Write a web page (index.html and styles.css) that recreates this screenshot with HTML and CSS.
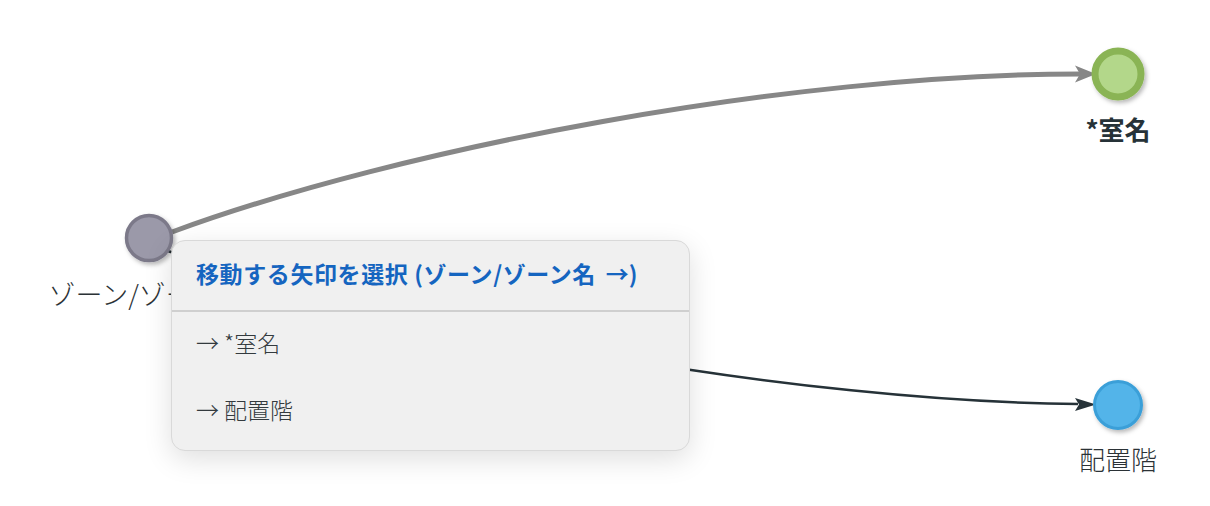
FILE: index.html
```html
<!DOCTYPE html>
<html lang="ja">
<head>
  <meta charset="UTF-8" />
  <meta name="viewport" content="width=device-width, initial-scale=1.0"/>
  <title>ゾーン</title>
  <link rel="stylesheet" href="styles.css">
</head>
<body>
  <div class="grafo">
    <svg class="lienzo" width="1210" height="506" viewBox="0 0 1210 506">
      <defs>
        <filter id="sombra" x="-50%" y="-50%" width="200%" height="200%">
          <feDropShadow dx="2" dy="2.5" stdDeviation="2" flood-color="#000" flood-opacity="0.28"/>
        </filter>
      </defs>

      <!-- aristas -->
      <path class="arista arista-activa" d="M172 232 C 400 148, 790 74, 1080 74"/>
      <polygon class="punta-activa" points="1096,74 1075,65.5 1080,74 1075,82.5"/>

      <path class="arista arista-normal" d="M165 250 C 400 330, 800 402, 1078 404"/>
      <polygon class="punta-normal" points="1096,404.5 1075,398 1079,404.5 1075,411"/>

      <!-- nodos -->
      <circle class="nodo nodo-origen" cx="149" cy="238" r="22.5" filter="url(#sombra)"/>
      <circle class="nodo nodo-elegido" cx="1118" cy="74" r="23" filter="url(#sombra)"/>
      <circle class="nodo nodo-destino" cx="1118" cy="405" r="23.5" filter="url(#sombra)"/>
    </svg>

    <div class="etiqueta etiqueta-origen">ゾーン/ゾーン名</div>
    <div class="etiqueta etiqueta-elegido">*室名</div>
    <div class="etiqueta etiqueta-destino">配置階</div>

    <div class="menu">
      <div class="menu-titulo">移動する矢印を選択 (ゾーン/ゾーン名 <span class="flecha">→</span>)</div>
      <div class="menu-item">→ *室名</div>
      <div class="menu-item">→ 配置階</div>
    </div>
  </div>
</body>
</html>
```

FILE: styles.css
```css
body {
  margin: 0;
  background-color: #ffffff;
  font-family: 'Noto Sans CJK JP', 'Noto Sans', sans-serif;
  color: #263238;
}

.grafo {
  position: relative;
  width: 1210px;
  height: 506px;
  overflow: hidden;
}

.lienzo {
  display: block;
}

.arista {
  fill: none;
}

.arista-activa {
  stroke: #878787;
  stroke-width: 5;
}

.punta-activa {
  fill: #878787;
}

.arista-normal {
  stroke: #263238;
  stroke-width: 2.5;
}

.punta-normal {
  fill: #263238;
}

.nodo-origen {
  fill: #9b99a9;
  stroke: #7b7989;
  stroke-width: 3.5;
}

.nodo-elegido {
  fill: #b3d78a;
  stroke: #8ab454;
  stroke-width: 7;
}

.nodo-destino {
  fill: #52b4e9;
  stroke: #3a9fd8;
  stroke-width: 3;
}

.etiqueta {
  position: absolute;
  width: 300px;
  margin-left: -150px;
  text-align: center;
  font-size: 26px;
  line-height: 32px;
  font-weight: 300;
  color: #2b3236;
  white-space: nowrap;
}

.etiqueta-origen {
  left: 147px;
  top: 278px;
  font-size: 27px;
}

.etiqueta-elegido {
  left: 1118px;
  top: 113px;
  font-weight: 700;
  color: #263238;
}

.etiqueta-destino {
  left: 1118px;
  top: 443px;
}

.menu {
  position: absolute;
  left: 171px;
  top: 240px;
  width: 519px;
  box-sizing: border-box;
  padding-bottom: 4px;
  background-color: #f0f0f0;
  border: 1.5px solid #d9d9d9;
  border-radius: 14px;
  box-shadow: 0 8px 28px rgba(0, 0, 0, 0.13);
}

.menu-titulo {
  display: flex;
  align-items: center;
  box-sizing: border-box;
  height: 71px;
  padding: 0 24px 5px;
  font-size: 23px;
  font-weight: 700;
  letter-spacing: 0.6px;
  color: #1565c0;
  border-bottom: 2px solid #cfcfcf;
  white-space: pre;
}

.flecha {
  display: inline-block;
  margin: 0 0 0 4px;
  letter-spacing: 0;
}

.menu-item {
  display: flex;
  align-items: center;
  box-sizing: border-box;
  height: 67px;
  padding: 0 24px 7px;
  font-size: 23px;
  font-weight: 300;
  color: #333a3e;
}
```
